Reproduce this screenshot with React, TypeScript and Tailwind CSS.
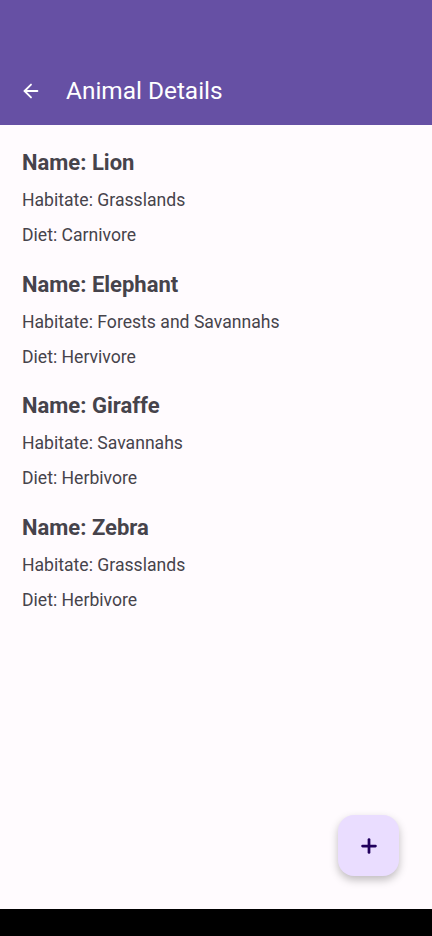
import { ArrowLeft, Plus } from "lucide-react";

const animals = [
	{ name: "Lion", habitat: "Grasslands", diet: "Carnivore" },
	{ name: "Elephant", habitat: "Forests and Savannahs", diet: "Hervivore" },
	{ name: "Giraffe", habitat: "Savannahs", diet: "Herbivore" },
	{ name: "Zebra", habitat: "Grasslands", diet: "Herbivore" },
];

const App = () => {
	return (
		<div className="w-[432px] h-[936px] flex flex-col bg-[#fffbfe] font-['Roboto','Liberation_Sans',sans-serif]">
			<header className="h-[125px] bg-[#6650a4] flex items-end pb-[19px] px-[20px] shrink-0">
				<div className="flex items-center h-[30px]">
					<ArrowLeft className="text-white w-[22px] h-[22px]" strokeWidth={2} />
					<h1 className="ml-[24px] text-white text-[24.4px] leading-[30px]">Animal Details</h1>
				</div>
			</header>
			<main className="relative flex-1 px-[22px] pt-[24px] text-[#46434b]">
				{animals.map((a, i) => (
					<div key={a.name} className={i > 0 ? "mt-[23.5px]" : ""}>
						<h2 className="text-[22px] leading-[28px] font-bold">Name: {a.name}</h2>
						<p className="mt-[11px] text-[17.6px] leading-[24px]">Habitate: {a.habitat}</p>
						<p className="mt-[11px] text-[17.6px] leading-[24px]">Diet: {a.diet}</p>
					</div>
				))}
				<button className="absolute right-[33px] bottom-[33px] w-[61px] h-[61px] rounded-[16px] bg-[#eaddff] flex items-center justify-center shadow-[0_4px_8px_rgba(0,0,0,0.25)]">
					<Plus className="w-[22px] h-[22px] text-[#21005d]" strokeWidth={3} />
				</button>
			</main>
			<div className="h-[27px] bg-black shrink-0" />
		</div>
	);
};

export default App;
